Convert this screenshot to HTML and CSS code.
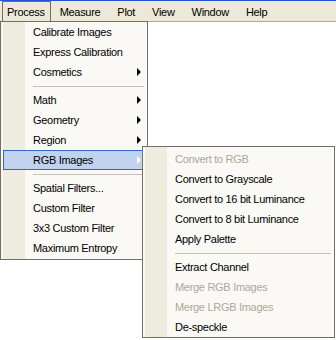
FILE: index.html
```html
<!DOCTYPE html>
<html>
<head>
    <title>Process Menu</title>
    <link rel="stylesheet" href="styles.css">
</head>
<body>
    <div class="menubar">
        <span class="bar-item open">Process</span>
        <span class="bar-item">Measure</span>
        <span class="bar-item">Plot</span>
        <span class="bar-item">View</span>
        <span class="bar-item">Window</span>
        <span class="bar-item">Help</span>
    </div>

    <div class="workspace"></div>

    <!-- Process dropdown -->
    <div class="menu main-menu">
        <div class="item">Calibrate Images</div>
        <div class="item">Express Calibration</div>
        <div class="item sub">Cosmetics</div>
        <div class="sep"></div>
        <div class="item sub">Math</div>
        <div class="item sub">Geometry</div>
        <div class="item sub">Region</div>
        <div class="item sub active">RGB Images</div>
        <div class="sep"></div>
        <div class="item">Spatial Filters...</div>
        <div class="item">Custom Filter</div>
        <div class="item">3x3 Custom Filter</div>
        <div class="item">Maximum Entropy</div>
    </div>

    <!-- RGB Images submenu -->
    <div class="menu sub-menu">
        <div class="item disabled">Convert to RGB</div>
        <div class="item">Convert to Grayscale</div>
        <div class="item">Convert to 16 bit Luminance</div>
        <div class="item">Convert to 8 bit Luminance</div>
        <div class="item">Apply Palette</div>
        <div class="sep"></div>
        <div class="item">Extract Channel</div>
        <div class="item disabled">Merge RGB Images</div>
        <div class="item disabled">Merge LRGB Images</div>
        <div class="item">De-speckle</div>
    </div>
</body>
</html>
```

FILE: styles.css
```css
:root {
    --bar-color: #ece9d8;
    --menu-color: #faf9f5;
    --gutter-color: #eeecdf;
    --border-color: #716f64;
    --sep-color: #c5c2b2;
    --hover-color: #c1d2ee;
    --hover-border: #316ac5;
    --disabled-color: #aca899;
    --text-color: #000000;
}

body {
    font-family: "Liberation Sans", Arial, sans-serif;
    font-size: 11px;
    letter-spacing: -0.3px;
    color: var(--text-color);
    background: #ffffff;
    margin: 0;
    width: 336px;
    height: 340px;
    position: relative;
    overflow: hidden;
}

.menubar {
    display: flex;
    height: 20px;
    padding-left: 2px;
    background: var(--bar-color);
    border-top: 1px solid #2254d8;
    border-bottom: 1px solid var(--disabled-color);
}

.bar-item {
    display: flex;
    align-items: center;
    padding: 0 7px 0 8px;
    border: 1px solid transparent;
    border-bottom: none;
}

.bar-item.open {
    padding: 0 5px 0 4px;
    border-color: var(--border-color);
}

.workspace {
    height: 318px;
}

.menu {
    position: absolute;
    border: 1px solid var(--border-color);
    background: linear-gradient(to right, var(--menu-color) 2px, var(--gutter-color) 2px, var(--gutter-color) 24px, var(--menu-color) 24px);
    box-sizing: border-box;
}

.main-menu {
    left: 0;
    top: 21px;
    width: 148px;
    padding: 0 3px 1px 2px;
}

.sub-menu {
    left: 142px;
    top: 146px;
    width: 193px;
    padding: 2px 3px 0 2px;
}

.item {
    position: relative;
    height: 20px;
    line-height: 20px;
    padding-left: 30px;
    white-space: nowrap;
    box-sizing: border-box;
}

.item.sub::after {
    content: "";
    position: absolute;
    right: 3px;
    top: 6px;
    border-left: 4px solid #000000;
    border-top: 4px solid transparent;
    border-bottom: 4px solid transparent;
}

.item.active {
    background: var(--hover-color);
    border: 1px solid var(--hover-border);
    line-height: 18px;
    padding-left: 29px;
}

.item.active::after {
    right: 2px;
    top: 5px;
    border-left-color: #ffffff;
}

.item.disabled {
    color: var(--disabled-color);
}

.sep {
    height: 8px;
    margin-left: 30px;
    background: linear-gradient(var(--sep-color), var(--sep-color)) 0 4px / 100% 1px no-repeat;
}
```
